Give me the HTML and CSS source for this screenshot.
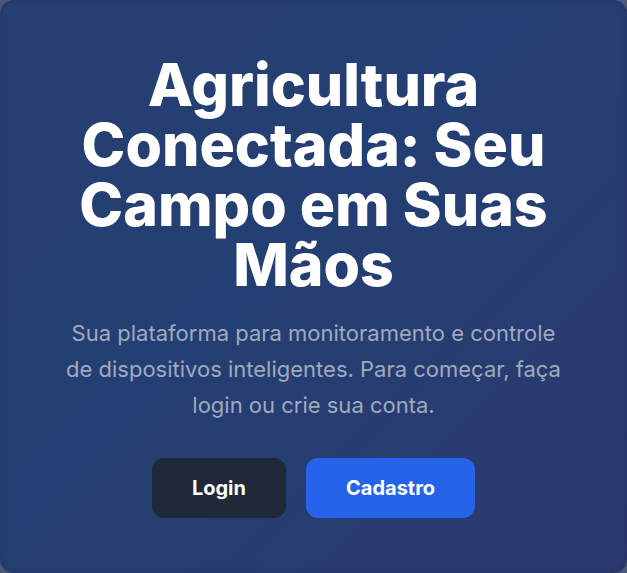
FILE: index.html
```html
<!DOCTYPE html>
<html lang="pt-BR">
<head>
<meta charset="utf-8">
<title>Agricultura Conectada</title>
<link rel="stylesheet" href="styles.css">
</head>
<body>
<main class="hero">
  <div class="hero-content">
    <h1 class="hero-title">Agricultura Conectada: Seu Campo em Suas Mãos</h1>
    <p class="hero-text">Sua plataforma para monitoramento e controle de dispositivos inteligentes. Para começar, faça login ou crie sua conta.</p>
    <div class="hero-actions">
      <a class="btn btn-dark" href="#">Login</a>
      <a class="btn btn-primary" href="#">Cadastro</a>
    </div>
  </div>
</main>
</body>
</html>
```

FILE: styles.css
```css
* { box-sizing: border-box; }
html, body { height: 100%; }
body {
  margin: 0;
  background: #4b5877;
  font-family: Inter, "Noto Sans", sans-serif;
}
.hero {
  height: 100%;
  display: flex;
  align-items: center;
  justify-content: center;
  border-radius: 14px;
  background: linear-gradient(135deg, #263f72 0%, #243f73 45%, #2b3970 100%);
  box-shadow: inset 0 0 6px rgba(0,0,0,0.15);
  padding: 0 40px;
}
.hero-content {
  display: flex;
  flex-direction: column;
  align-items: center;
  text-align: center;
  max-width: 540px;
}
.hero-title {
  margin: 0 0 20px;
  font-size: 59px;
  line-height: 60px;
  font-weight: 800;
  color: #ffffff;
}
.hero-text {
  margin: 0 0 35px;
  max-width: 505px;
  font-size: 22px;
  line-height: 36px;
  color: #a0aabd;
}
.hero-actions {
  display: flex;
  justify-content: center;
  gap: 20px;
}
.btn {
  display: inline-block;
  padding: 16px 40px;
  font-size: 20px;
  line-height: 28px;
  font-weight: 700;
  color: #ffffff;
  text-decoration: none;
  border-radius: 12px;
}
.btn-dark { background: #1f2937; }
.btn-primary { background: #2563eb; }
```
